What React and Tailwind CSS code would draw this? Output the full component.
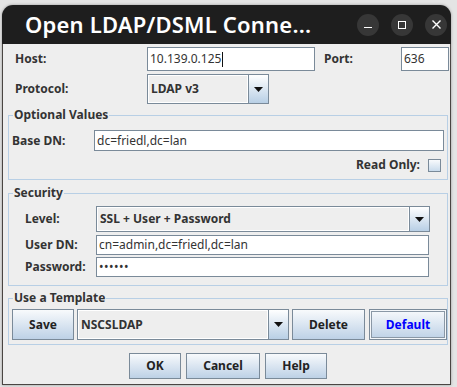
import React from 'react'

const font = { fontFamily: '"Noto Sans", "DejaVu Sans", sans-serif' }

function Arrow() {
  return (
    <svg width="9" height="5" viewBox="0 0 9 5">
      <path d="M0 0H9L4.5 5Z" fill="#111" />
    </svg>
  )
}

function Combo({ value, className, arrowW = 'w-[19px]' }) {
  return (
    <div className={`flex border border-[#7a8a99] bg-[#eeeeee] ${className}`}>
      <div className="flex-1 flex items-center pl-[3px] border-r border-[#7a8a99] font-bold text-[12px] text-[#333] shadow-[inset_0_0_0_1px_#ffffff]">
        {value}
      </div>
      <div className={`${arrowW} flex items-center justify-center bg-gradient-to-b from-[#ffffff] to-[#b8cfe5]`}>
        <Arrow />
      </div>
    </div>
  )
}

function Input({ value, className, caret }) {
  return (
    <div className={`flex items-center border border-[#7a8a99] bg-white pl-[2px] text-[12px] text-[#333] ${className}`}>
      {value}
      {caret && <span className="w-px h-[15px] bg-[#111] ml-[1px]" />}
    </div>
  )
}

function Btn({ children, className, blue }) {
  return (
    <div
      className={`flex items-center justify-center border border-[#7a8a99] bg-gradient-to-b from-[#f8fafc] to-[#bdd1e6] font-bold text-[12px] ${blue ? 'text-[#0000ff] shadow-[inset_0_0_0_1px_#f4f7fa,inset_0_0_0_2px_#8a98a6]' : 'text-[#222]'} ${className}`}
    >
      {children}
    </div>
  )
}

function Group({ title, className, children }) {
  return (
    <fieldset className={`border border-[#b8cfe5] ${className}`}>
      <legend className="ml-[4px] px-px font-bold text-[12px] text-[#333] leading-[14px]">{title}</legend>
      {children}
    </fieldset>
  )
}

export default function App() {
  return (
    <div className="w-[457px] h-[387px] bg-[#e4e4e4] pt-[5px] pl-[2px] overflow-hidden" style={font}>
      <div className="w-[449px] h-[380px] rounded-t-[11px] overflow-hidden flex flex-col bg-[#1e1e1e] shadow-[0_0_3px_rgba(0,0,0,0.35)]">
        {/* title bar */}
        <div className="h-[39px] flex items-center pl-[23px] pr-[4px] shrink-0">
          <div className="flex-1 text-white text-[22px] font-semibold tracking-[0.2px] leading-none pb-[1px]">
            Open LDAP/DSML Conne...
          </div>
          <div className="flex gap-[12px]">
            <div className="w-[22px] h-[22px] rounded-full bg-[#373737] flex items-center justify-center">
              <div className="w-[8px] h-[1.5px] bg-white mt-[6px]" />
            </div>
            <div className="w-[22px] h-[22px] rounded-full bg-[#373737] flex items-center justify-center">
              <div className="w-[8px] h-[8px] border-[1.5px] border-white" />
            </div>
            <div className="w-[22px] h-[22px] rounded-full bg-[#373737] flex items-center justify-center">
              <svg width="9" height="9" viewBox="0 0 9 9">
                <path d="M0.5 0.5L8.5 8.5M8.5 0.5L0.5 8.5" stroke="#fff" strokeWidth="1.4" />
              </svg>
            </div>
          </div>
        </div>

        {/* body */}
        <div className="flex-1 bg-[#eeeeee] border-x border-b border-[#4a4542] pl-[4px] pr-[1px] pt-[3px] text-[#333]">
          {/* host row */}
          <div className="flex items-center h-[24px]">
            <div className="w-[140px] pl-[8px] font-bold text-[12px]">Host:</div>
            <Input value="10.139.0.125" caret className="w-[168px] h-[24px]" />
            <div className="w-[86px] pl-[9px] font-bold text-[12px]">Port:</div>
            <Input value="636" className="w-[48px] h-[24px]" />
          </div>
          {/* protocol row */}
          <div className="flex items-center mt-[3px] h-[30px]">
            <div className="w-[140px] pl-[8px] font-bold text-[12px]">Protocol:</div>
            <Combo value="LDAP v3" className="w-[122px] h-[30px]" />
          </div>

          <Group title="Optional Values" className="mt-[4px] ml-px w-[440px] h-[72px]">
            <div className="pl-[3px]">
              <div className="flex items-center mt-[8px]">
                <div className="w-[82px] font-bold text-[12px]">Base DN:</div>
                <Input value="dc=friedl,dc=lan" className="w-[350px] h-[21px]" />
              </div>
              <div className="flex items-center justify-end mt-[5px] pr-[6px]">
                <div className="font-bold text-[12px] mr-[8px]">Read Only:</div>
                <div className="w-[13px] h-[13px] border border-[#7a8a99] bg-gradient-to-b from-[#f8fafc] to-[#c9dbec]" />
              </div>
            </div>
          </Group>

          <Group title="Security" className="mt-[6px] ml-px w-[440px] h-[100px]">
            <div className="pl-[16px]">
              <div className="flex items-center mt-[6px]">
                <div className="w-[71px] font-bold text-[12px]">Level:</div>
                <Combo value="SSL + User + Password" className="w-[334px] h-[26px]" />
              </div>
              <div className="flex items-center mt-[3px]">
                <div className="w-[71px] font-bold text-[12px]">User DN:</div>
                <Input value="cn=admin,dc=friedl,dc=lan" className="w-[333px] h-[20px]" />
              </div>
              <div className="flex items-center mt-[2px]">
                <div className="w-[71px] font-bold text-[12px]">Password:</div>
                <Input value="••••••" className="w-[333px] h-[20px] text-[8px] tracking-[0.5px]" />
              </div>
            </div>
          </Group>

          <Group title="Use a Template" className="mt-[5px] ml-px w-[440px] h-[54px]">
            <div className="flex items-center gap-[3px] mt-[4px] pl-[3px]">
              <Btn className="w-[62px] h-[31px]">Save</Btn>
              <Combo value="NSCSLDAP" className="w-[212px] h-[31px]" />
              <Btn className="w-[73px] h-[31px]">Delete</Btn>
              <Btn blue className="w-[78px] h-[31px] ml-px">Default</Btn>
            </div>
          </Group>

          <div className="flex gap-[5px] mt-[8px] ml-[122px]">
            <Btn className="w-[52px] h-[26px]">OK</Btn>
            <Btn className="w-[74px] h-[26px]">Cancel</Btn>
            <Btn className="w-[62px] h-[26px]">Help</Btn>
          </div>
        </div>
      </div>
    </div>
  )
}
